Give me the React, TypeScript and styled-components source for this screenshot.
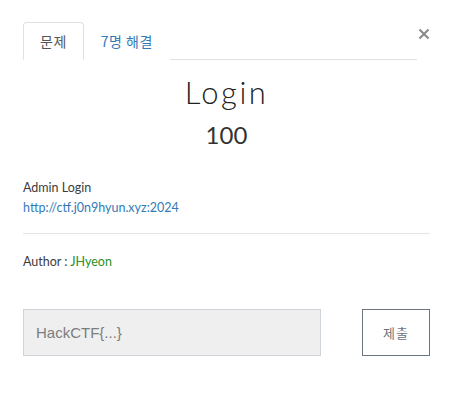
import React from 'react';
import styled, { createGlobalStyle } from 'styled-components';

const GlobalStyle = createGlobalStyle`
  body {
    margin: 0;
    background: #fff;
    font-family: Lato, "Noto Sans CJK KR", sans-serif;
    color: #3c3c3c;
  }
`;

const Modal = styled.div`
  width: 455px;
  padding: 22px 25px 0 23px;
  box-sizing: border-box;
`;

const Header = styled.div`
  display: flex;
  align-items: flex-start;
`;

const TabList = styled.div`
  flex: 1;
  display: flex;
  border-bottom: 1px solid #dee2e6;
`;

const Tab = styled.div<{ $active?: boolean }>`
  height: 38px;
  box-sizing: border-box;
  padding: 0 16px;
  margin-bottom: -1px;
  display: flex;
  align-items: center;
  font-family: "Noto Sans CJK KR", sans-serif;
  font-size: 14px;
  letter-spacing: 0.5px;
  color: ${p => (p.$active ? '#555' : '#337ab7')};
  border: 1px solid ${p => (p.$active ? '#dee2e6' : 'transparent')};
  border-bottom-color: ${p => (p.$active ? '#fff' : 'transparent')};
  border-radius: 4px 4px 0 0;
  background: #fff;
`;

const Close = styled.button`
  border: 0;
  background: none;
  padding: 0;
  margin: 6px 0 0 1px;
  width: 12px;
  height: 12px;
  cursor: pointer;
  display: flex;
`;

const Heading = styled.div`
  text-align: center;
  padding-top: 13px;
`;

const Title = styled.h1`
  margin: 0;
  font-family: Lato, sans-serif;
  font-weight: 300;
  font-size: 31px;
  line-height: 38px;
  letter-spacing: 2.5px;
  color: #222;
`;

const Points = styled.div`
  margin-top: 10px;
  font-weight: 400;
  font-size: 24px;
  line-height: 28px;
  color: #333;
`;

const Description = styled.div`
  margin-top: 29px;
  font-size: 12.5px;
  line-height: 20px;
`;

const Link = styled.a`
  color: #337ab7;
  text-decoration: none;
`;

const Divider = styled.hr`
  border: 0;
  border-top: 1px solid #e5e5e5;
  margin: 15px 0 18px;
`;

const Author = styled.div`
  font-size: 12.5px;
  line-height: 20px;
`;

const AuthorName = styled.span`
  color: #2a8f2a;
`;

const SubmitRow = styled.div`
  display: flex;
  justify-content: space-between;
  margin-top: 37px;
`;

const FlagInput = styled.input`
  width: 298px;
  height: 47px;
  box-sizing: border-box;
  border: 1px solid #ced4da;
  background: #efefef;
  padding: 0 12px;
  font-family: "Liberation Sans", Arial, sans-serif;
  font-size: 15px;
  font-weight: 400;
  color: #495057;
  &::placeholder {
    color: #7d7d7d;
  }
`;

const SubmitButton = styled.button`
  width: 68px;
  height: 47px;
  box-sizing: border-box;
  border: 1px solid #6c757d;
  background: #fff;
  font-family: "Noto Sans CJK KR", sans-serif;
  font-size: 13px;
  letter-spacing: 1px;
  color: #6c757d;
`;

export default function App() {
  return (
    <>
      <GlobalStyle />
      <Modal>
        <Header>
          <TabList>
            <Tab $active>문제</Tab>
            <Tab>7명 해결</Tab>
          </TabList>
          <Close aria-label="close">
            <svg width="12" height="12" viewBox="0 0 12 12">
              <path d="M1.5 1.5 L10.5 10.5 M10.5 1.5 L1.5 10.5" stroke="#888" strokeWidth="2" />
            </svg>
          </Close>
        </Header>
        <Heading>
          <Title>Login</Title>
          <Points>100</Points>
        </Heading>
        <Description>
          Admin Login
          <br />
          <Link href="#">http://ctf.j0n9hyun.xyz:2024</Link>
        </Description>
        <Divider />
        <Author>
          Author : <AuthorName>JHyeon</AuthorName>
        </Author>
        <SubmitRow>
          <FlagInput placeholder="HackCTF{...}" />
          <SubmitButton>제출</SubmitButton>
        </SubmitRow>
      </Modal>
    </>
  );
}
